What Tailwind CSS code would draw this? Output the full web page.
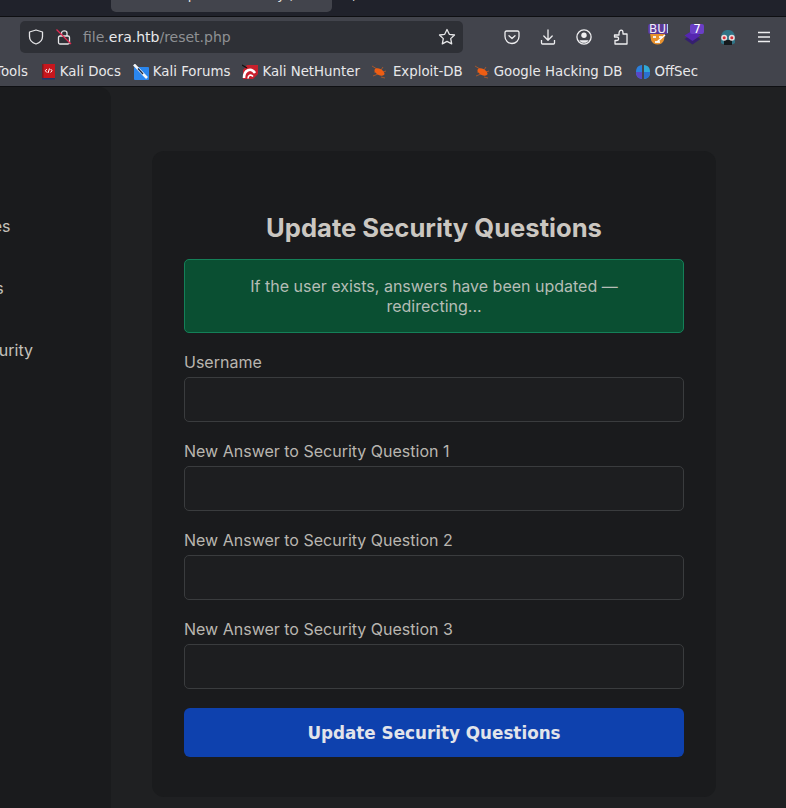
<!DOCTYPE html>
<html>
<head>
<meta charset="utf-8">
<script src="https://cdn.jsdelivr.net/npm/@tailwindcss/browser@4"></script>
</head>
<body class="bg-[#1f2022]">
<div class="w-[786px] h-[808px] overflow-hidden flex flex-col font-['Inter',sans-serif]">

  <!-- Tab strip -->
  <div class="h-[17px] shrink-0 bg-[#20222b] border-b border-[#0e0f12] overflow-hidden pl-[111px] flex items-start font-['DejaVu_Sans',sans-serif] text-[13.33px] leading-[14px] text-[#e5e5e5] whitespace-nowrap">
    <div class="w-[221px] h-[12px] bg-[#42444c] rounded-b-[5px] overflow-hidden pl-[67px]">
      <div class="mt-[-12px]">Update Security ,</div>
    </div>
    <div class="ml-[20px] mt-[-12px]">,</div>
  </div>

  <!-- Toolbar -->
  <div class="h-[40px] shrink-0 bg-[#42444c] flex items-center pl-[20px] font-['DejaVu_Sans',sans-serif]">
    <div class="w-[443px] h-[32px] rounded-[5px] bg-[#2e3036] flex items-center pl-[8px] pr-[7px]">
      <svg class="w-[16px] h-[16px] shrink-0" viewBox="0 0 16 16" fill="none" stroke="#e6e6e8" stroke-width="1.3">
        <path d="M8 1 L14.5 3 V7.5 C14.5 11 12 13.7 8 15 C4 13.7 1.5 11 1.5 7.5 V3 Z" stroke-linejoin="round"/>
      </svg>
      <svg class="w-[16px] h-[16px] shrink-0 ml-[12px]" viewBox="0 0 16 16" fill="none">
        <rect x="2.5" y="7" width="11" height="8" rx="1.5" stroke="#e6e6e8" stroke-width="1.3"/>
        <path d="M5.5 7 V4 C5.5 1.2 11 1.2 11 4 V7" stroke="#e6e6e8" stroke-width="1.3"/>
        <path d="M0.5 0.5 L15 15" stroke="#e22850" stroke-width="1.3"/>
      </svg>
      <div class="ml-[11px] text-[14px] text-[#8f9094] whitespace-nowrap">file.<span class="text-[#e8e8ea]">era.htb</span>/reset.php</div>
      <svg class="w-[18px] h-[18px] ml-auto shrink-0" viewBox="0 0 18 18" fill="none" stroke="#e6e6e8" stroke-width="1.3" stroke-linejoin="round">
        <path d="M9 1.5 L11.3 6.3 L16.5 7 L12.7 10.6 L13.7 15.9 L9 13.4 L4.3 15.9 L5.3 10.6 L1.5 7 L6.7 6.3 Z"/>
      </svg>
    </div>

    <div class="flex items-center ml-[41px]">
      <!-- pocket -->
      <svg class="w-[16px] h-[16px]" viewBox="0 0 16 16" fill="none" stroke="#eeeef0" stroke-width="1.3">
        <path d="M2.5 2 H13.5 C14.4 2 15 2.6 15 3.5 V7.5 C15 11.5 11.8 14.5 8 14.5 C4.2 14.5 1 11.5 1 7.5 V3.5 C1 2.6 1.6 2 2.5 2 Z"/>
        <path d="M5 6.8 L8 9.6 L11 6.8" stroke-linecap="round" stroke-linejoin="round"/>
      </svg>
      <!-- download -->
      <svg class="w-[16px] h-[16px] ml-[20px]" viewBox="0 0 16 16" fill="none" stroke="#eeeef0" stroke-width="1.3">
        <path d="M8 1 V11 M3.8 7 L8 11.2 L12.2 7" stroke-linecap="round" stroke-linejoin="round"/>
        <path d="M1.5 11 V14 C1.5 14.6 1.9 15 2.5 15 H13.5 C14.1 15 14.5 14.6 14.5 14 V11"/>
      </svg>
      <!-- account -->
      <svg class="w-[16px] h-[16px] ml-[20px]" viewBox="0 0 16 16" fill="none">
        <circle cx="8" cy="8" r="7.1" stroke="#eeeef0" stroke-width="1.3"/>
        <circle cx="8" cy="6.2" r="2.7" fill="#eeeef0"/>
        <path d="M3.4 11.2 H12.6 C12 12.8 10.2 13.8 8 13.8 C5.8 13.8 4 12.8 3.4 11.2 Z" fill="#eeeef0"/>
      </svg>
      <!-- extensions -->
      <svg class="w-[16px] h-[16px] ml-[21px]" viewBox="0 0 16 16" fill="none" stroke="#eeeef0" stroke-width="1.3" stroke-linejoin="round">
        <path d="M1.5 6 H6 V4.5 C6 2.8 7 1.2 8.2 1.2 C9.4 1.2 10 2.6 10 4 V5 H14 V15 H2 V11.5 H4 C5 11.5 5.6 10.8 5.6 9.8 C5.6 8.8 5 8 4 8 H1.5 Z"/>
      </svg>
      <!-- BurpSuite -->
      <div class="relative w-[20px] h-[26px] ml-[19px] overflow-hidden">
        <svg class="absolute left-[1px] top-[9px] w-[17px] h-[13px]" viewBox="0 0 17 13">
          <path d="M1 0 L16 0 L15 7 C13 13 4 13 2 7 Z" fill="#e8912d"/>
          <path d="M4 3 H7 V5 H4 Z M10 3 H13 V5 H10 Z M6 8 H11 V10 H6 Z" fill="#f5efe6"/>
          <path d="M8 9 L16 2" stroke="#fff" stroke-width="1.5"/>
        </svg>
        <div class="absolute left-0 top-0 w-[20px] h-[10px] overflow-hidden bg-[#5b3a97] rounded-l-[2px] text-[12px] leading-[10px] text-[#f0ecf7] pl-[1px] whitespace-nowrap">BUR</div>
      </div>
      <!-- stack with count -->
      <div class="relative w-[22px] h-[26px] ml-[16px]">
        <svg class="absolute left-0 top-[6px] w-[17px] h-[15px]" viewBox="0 0 17 15">
          <path d="M8.5 4 L16.5 9 L8.5 14.5 L0.5 9 Z" fill="#35206f"/>
          <path d="M8.5 0.5 L16.5 5.5 L8.5 11 L0.5 5.5 Z" fill="#5526b0"/>
        </svg>
        <div class="absolute left-[6px] top-0 w-[14px] h-[10px] bg-[#6a3fc6] rounded-[2px] text-[12px] leading-[10px] text-white text-center">7</div>
      </div>
      <!-- goggles -->
      <svg class="w-[16px] h-[17px] ml-[14px] mt-[1px]" viewBox="0 0 16 17">
        <path d="M1 9 C1 3.5 4 1 8 1 C12 1 15 3.5 15 9 V14 C13 16 3 16 1 14 Z" fill="#2f7385"/>
        <rect x="4" y="11" width="8" height="5" fill="#14191c"/>
        <circle cx="4.2" cy="8.8" r="3" fill="#e8dede"/>
        <circle cx="11.8" cy="8.8" r="3" fill="#e8dede"/>
        <circle cx="4.2" cy="8.8" r="1.5" fill="#d8303a"/>
        <circle cx="11.8" cy="8.8" r="1.5" fill="#d8303a"/>
      </svg>
      <!-- menu -->
      <svg class="w-[14px] h-[12px] ml-[21px]" viewBox="0 0 14 12" stroke="#eeeef0" stroke-width="1.3">
        <path d="M1 1.5 H13 M1 6 H13 M1 10.5 H13"/>
      </svg>
    </div>
  </div>

  <!-- Bookmarks -->
  <div class="h-[30px] shrink-0 bg-[#42444c] border-b border-[#0e0f12] flex items-center text-[13.33px] text-[#e8e8ea] font-['DejaVu_Sans',sans-serif] whitespace-nowrap overflow-hidden">
    <span class="ml-[-5px]">Tools</span>
    <svg class="w-[14px] h-[17px] ml-[13px] mr-[5px]" viewBox="0 0 14 17">
      <rect x="1" y="1" width="13" height="15" fill="#c8161d"/>
      <rect x="1" y="1" width="1.5" height="15" fill="#7d1a1f"/>
      <rect x="1" y="15" width="13" height="1.5" fill="#22356b"/>
      <path d="M5.8 6 L4.4 7.7 L5.8 9.5 M9.6 6 L11 7.7 L9.6 9.5 M8.5 5.5 L7 10" stroke="#fff" fill="none"/>
    </svg>
    <span>Kali Docs</span>
    <svg class="w-[16px] h-[16px] ml-[12px] mr-[4px]" viewBox="0 0 16 16">
      <rect x="1" y="3" width="15" height="13" rx="1" fill="#2a86ee"/>
      <path d="M1 0.5 L14 14" stroke="#f4f6f8" stroke-width="2.6"/>
      <path d="M5 4.5 L10 10" stroke="#1c2a44" stroke-width="1.4"/>
    </svg>
    <span>Kali Forums</span>
    <svg class="w-[16px] h-[16px] ml-[12px] mr-[4px]" viewBox="0 0 16 16">
      <path d="M5 1 H16 V10 L11 15 H1 V6 Z" fill="#c8202c"/>
      <path d="M2 14 C2 6 9 3 13 9" fill="none" stroke="#fff" stroke-width="2.6"/>
      <path d="M6 14.5 C6 11 9 10 11 12.5" fill="none" stroke="#fff" stroke-width="1.6"/>
      <path d="M0 1 L5 4" stroke="#111" stroke-width="1.4"/>
    </svg>
    <span>Kali NetHunter</span>
    <svg class="w-[15px] h-[14px] ml-[12px] mr-[6px]" viewBox="0 0 15 14">
      <path d="M0 1 L5 4 M1 11 L6 9 M2 7 L4 7 M9 12 L13 13 M11 2 L9 5 M14 6 L11 7" stroke="#d9621f" stroke-width="0.9" opacity="0.7"/>
      <ellipse cx="7.5" cy="7" rx="5.5" ry="3" transform="rotate(28 7.5 7)" fill="#ee5d13"/>
    </svg>
    <span>Exploit-DB</span>
    <svg class="w-[15px] h-[14px] ml-[12px] mr-[4px]" viewBox="0 0 15 14">
      <path d="M0 1 L5 4 M1 11 L6 9 M2 7 L4 7 M9 12 L13 13 M11 2 L9 5 M14 6 L11 7" stroke="#d9621f" stroke-width="0.9" opacity="0.7"/>
      <ellipse cx="7.5" cy="7" rx="5.5" ry="3" transform="rotate(28 7.5 7)" fill="#ee5d13"/>
    </svg>
    <span>Google Hacking DB</span>
    <svg class="w-[16px] h-[16px] ml-[13px] mr-[3px]" viewBox="0 0 16 16">
      <path d="M7 1 C3 1.3 1 4 1 8 C1 12 3 14.7 7 15 Z" fill="#2b7fdc"/>
      <path d="M9 1 C13 1.3 15 4 15 8 C15 12 13 14.7 9 15 Z" fill="#2fa9d8"/>
      <path d="M1 8 C1 12 3 14.7 7 15 V8 Z" fill="#5a47c4"/>
      <path d="M9 8 V15 C13 14.7 15 12 15 8 Z" fill="#2b6fd0"/>
    </svg>
    <span>OffSec</span>
  </div>

  <!-- Page -->
  <div class="flex-1 flex min-h-0">
    <aside class="w-[111px] shrink-0 bg-[#1a1b1d] rounded-tr-[12px] overflow-hidden pt-[127px] text-[16px] text-[#c4c1bb] whitespace-nowrap">
      <div class="ml-[-90px] w-[99px] h-[62px] text-right leading-[24px]">Manage Files</div>
      <div class="ml-[-90px] w-[93px] h-[62px] text-right leading-[24px]">Upload Files</div>
      <div class="ml-[-90px] w-[123px] h-[62px] text-right leading-[24px]">Update Security</div>
    </aside>

    <main class="flex-1 pl-[41px] pt-[64px]">
      <div class="w-[564px] h-[646px] bg-[#1a1b1d] rounded-[12px] px-[32px] pt-[60px]">
        <h1 class="text-[25.6px] leading-[34px] font-bold text-[#cbc7c1] text-center">Update Security Questions</h1>
        <div class="mt-[14px] h-[74px] bg-[#0a4f32] border border-[#148058] rounded-[5px] text-[16px] leading-[20px] text-[#b5bdb6] text-center px-[40px] pt-[16px]">
          If the user exists, answers have been updated — redirecting...
        </div>

        <label class="block mt-[17px] text-[16px] leading-[24px] text-[#b9b6b0]">Username</label>
        <input class="block mt-[3px] w-full h-[45px] bg-[#1d1e20] border border-[#3a3c3e] rounded-[5px]" type="text">

        <label class="block mt-[17px] text-[16px] leading-[24px] text-[#b9b6b0]">New Answer to Security Question 1</label>
        <input class="block mt-[3px] w-full h-[45px] bg-[#1d1e20] border border-[#3a3c3e] rounded-[5px]" type="text">

        <label class="block mt-[17px] text-[16px] leading-[24px] text-[#b9b6b0]">New Answer to Security Question 2</label>
        <input class="block mt-[3px] w-full h-[45px] bg-[#1d1e20] border border-[#3a3c3e] rounded-[5px]" type="text">

        <label class="block mt-[17px] text-[16px] leading-[24px] text-[#b9b6b0]">New Answer to Security Question 3</label>
        <input class="block mt-[3px] w-full h-[45px] bg-[#1d1e20] border border-[#3a3c3e] rounded-[5px]" type="text">

        <button class="block mt-[19px] w-full h-[49px] pt-[2px] bg-[#0e41ae] rounded-[6px] text-[16.8px] font-bold text-[#e2e4ea] font-['DejaVu_Sans',sans-serif]">Update Security Questions</button>
      </div>
    </main>
  </div>
</div>
</body>
</html>
